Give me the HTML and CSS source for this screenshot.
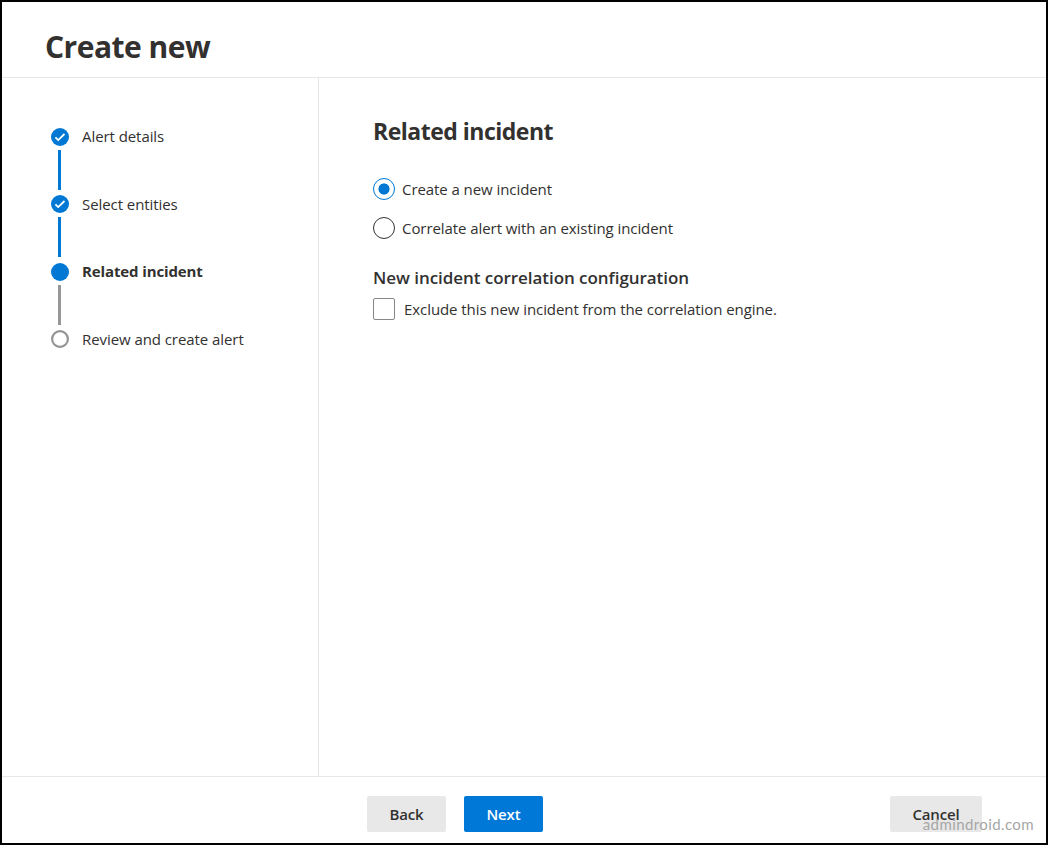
FILE: index.html
```html
<!DOCTYPE html>
<html lang="en">
<head>
  <meta charset="UTF-8">
  <meta name="viewport" content="width=device-width, initial-scale=1.0">
  <title>Create new</title>
  <link rel="stylesheet" href="styles.css">
</head>
<body>
  <div class="wizard">
    <header class="header">
      <h1>Create new</h1>
    </header>

    <div class="content">
      <nav class="steps">
        <div class="step done">
          <div class="marker">
            <svg class="dot" viewBox="0 0 18 18"><circle cx="9" cy="9" r="9"/><path d="M4.4 9.3l2.8 2.8 6.3-6.1"/></svg>
            <div class="line"></div>
          </div>
          <span class="label">Alert details</span>
        </div>
        <div class="step done">
          <div class="marker">
            <svg class="dot" viewBox="0 0 18 18"><circle cx="9" cy="9" r="9"/><path d="M4.4 9.3l2.8 2.8 6.3-6.1"/></svg>
            <div class="line"></div>
          </div>
          <span class="label">Select entities</span>
        </div>
        <div class="step current">
          <div class="marker">
            <svg class="dot" viewBox="0 0 18 18"><circle cx="9" cy="9" r="9"/></svg>
            <div class="line"></div>
          </div>
          <span class="label">Related incident</span>
        </div>
        <div class="step">
          <div class="marker">
            <svg class="dot" viewBox="0 0 18 18"><circle cx="9" cy="9" r="7.9"/></svg>
          </div>
          <span class="label">Review and create alert</span>
        </div>
      </nav>

      <main class="main">
        <h2>Related incident</h2>
        <label class="option">
          <input type="radio" name="incident" checked>
          <span>Create a new incident</span>
        </label>
        <label class="option">
          <input type="radio" name="incident">
          <span>Correlate alert with an existing incident</span>
        </label>
        <h3>New incident correlation configuration</h3>
        <label class="option check">
          <input type="checkbox">
          <span>Exclude this new incident from the correlation engine.</span>
        </label>
      </main>
    </div>

    <footer class="footer">
      <button>Back</button>
      <button class="primary">Next</button>
      <button class="cancel">Cancel</button>
    </footer>
    <div class="watermark">admindroid.com</div>
  </div>
</body>
</html>
```
FILE: styles.css
```css
* {
  box-sizing: border-box;
}

body {
  margin: 0;
  font-family: "Open Sans", "Noto Sans", sans-serif;
  font-size: 15px;
  letter-spacing: -0.07px;
  color: #323130;
  background-color: #fff;
}

h1, h2, h3 {
  margin: 0;
  white-space: nowrap;
}

.wizard {
  position: relative;
  display: flex;
  flex-direction: column;
  height: 845px;
  border: 2px solid #000;
}

.header {
  height: 76px;
  padding: 22px 0 0 43px;
  border-bottom: 1px solid #e6e6e6;
}

h1 {
  font-size: 30px;
  line-height: 46px;
  font-weight: 700;
  letter-spacing: -0.5px;
}

.content {
  flex: 1;
  display: flex;
}

/* Steps */
.steps {
  width: 317px;
  padding: 50px 0 0 49px;
  border-right: 1px solid #e6e6e6;
}

.step {
  display: flex;
  gap: 13px;
  height: 67.4px;
}

.marker {
  width: 18px;
}

.dot {
  display: block;
  width: 18px;
  height: 18px;
  fill: #fff;
  stroke: #979593;
  stroke-width: 2.2;
}

.dot path {
  fill: none;
  stroke: #fff;
  stroke-width: 1.8;
}

.done circle,
.current circle {
  fill: #0078d4;
  stroke: none;
}

.line {
  width: 3px;
  height: 40px;
  margin: 4px 0 0 7px;
  background-color: #979797;
}

.done .line {
  background-color: #0078d4;
}

.label {
  line-height: 17px;
  white-space: nowrap;
}

.step:nth-child(even) .label {
  padding-top: 1px;
}

.current .label {
  font-weight: 700;
  letter-spacing: -0.12px;
}

/* Form */
.main {
  flex: 1;
  padding: 36px 0 0 54px;
}

h2 {
  margin-bottom: 29px;
  font-size: 23px;
  line-height: 35px;
  letter-spacing: -0.5px;
}

h3 {
  margin: 27px 0 8px;
  font-size: 17px;
  line-height: 24px;
  font-weight: 600;
  letter-spacing: -0.05px;
}

.option {
  display: flex;
  align-items: center;
  gap: 7px;
  height: 22px;
  white-space: nowrap;
}

.option + .option {
  margin-top: 17px;
}

.check {
  gap: 9px;
}

input {
  appearance: none;
  width: 22px;
  height: 22px;
  margin: 0;
  border: 1px solid #323130;
  border-radius: 50%;
}

input:checked {
  border-color: #0078d4;
  background: radial-gradient(circle, #0078d4 5.2px, transparent 5.9px);
}

.check input {
  border-color: #8a8886;
  border-radius: 2px;
}

/* Footer */
.footer {
  display: flex;
  gap: 18px;
  height: 67px;
  padding: 19px 64px 0 365px;
  border-top: 1px solid #e6e6e6;
}

button {
  width: 79px;
  height: 36px;
  padding: 0;
  border: none;
  border-radius: 2px;
  background-color: #e8e8e8;
  color: #323130;
  font-family: inherit;
  font-size: 15px;
  font-weight: 600;
  letter-spacing: -0.15px;
}

.primary {
  background-color: #0078d7;
  color: #fff;
}

.cancel {
  width: 92px;
  margin-left: auto;
}

.watermark {
  position: absolute;
  right: 12px;
  bottom: 9px;
  font-family: Lato, sans-serif;
  font-size: 15px;
  line-height: 20px;
  letter-spacing: 0.4px;
  color: #a6a6a6;
}
```
